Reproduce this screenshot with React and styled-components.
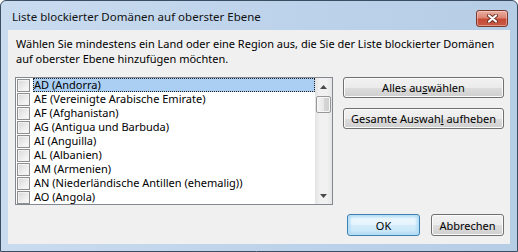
import React, { useState } from 'react'
import styled, { createGlobalStyle } from 'styled-components'

const GlobalStyle = createGlobalStyle`
  body {
    margin: 0;
    background: #ffffff;
    font-family: "Noto Sans", "Open Sans", sans-serif;
  }
  * { box-sizing: border-box; }
`

const countries = [
  'AD (Andorra)',
  'AE (Vereinigte Arabische Emirate)',
  'AF (Afghanistan)',
  'AG (Antigua und Barbuda)',
  'AI (Anguilla)',
  'AL (Albanien)',
  'AM (Armenien)',
  'AN (Niederländische Antillen (ehemalig))',
  'AO (Angola)',
]

function CloseGlyph() {
  return (
    <svg width="11" height="9" viewBox="0 0 11 9">
      <path d="M2 1.5 L9 7.5 M9 1.5 L2 7.5" stroke="#6d3028" strokeWidth="4" strokeLinecap="round" />
      <path d="M2 1.5 L9 7.5 M9 1.5 L2 7.5" stroke="#ffffff" strokeWidth="2.2" strokeLinecap="round" />
    </svg>
  )
}

function Arrow({ down }) {
  return (
    <svg width="7" height="4" viewBox="0 0 7 4">
      <path d={down ? 'M0 0 L7 0 L3.5 4 Z' : 'M0 4 L7 4 L3.5 0 Z'} fill="#4a4a4a" />
    </svg>
  )
}

function App() {
  const [selected, setSelected] = useState(0)
  const [checked, setChecked] = useState({})

  return (
    <>
      <GlobalStyle />
      <Window>
        <TitleBar>
          <Title>Liste blockierter Domänen auf oberster Ebene</Title>
          <CloseButton><CloseGlyph /></CloseButton>
        </TitleBar>
        <Content>
          <Prompt>
            Wählen Sie mindestens ein Land oder eine Region aus, die Sie der Liste blockierter Domänen
            <br />
            auf oberster Ebene hinzufügen möchten.
          </Prompt>
          <MainRow>
            <ListBox>
              <Items>
                {countries.map((c, i) => (
                  <Item key={c} onClick={() => setSelected(i)}>
                    <Check
                      $on={checked[i]}
                      onClick={(e) => {
                        e.stopPropagation()
                        setChecked({ ...checked, [i]: !checked[i] })
                      }}
                    />
                    <Label $selected={selected === i}>{c}</Label>
                  </Item>
                ))}
              </Items>
              <ScrollBar>
                <ScrollArrow><Arrow /></ScrollArrow>
                <Thumb />
                <Track />
                <ScrollArrow><Arrow down /></ScrollArrow>
              </ScrollBar>
            </ListBox>
            <SideButtons>
              <Button><span>Alles au<u>s</u>wählen</span></Button>
              <Button><span>Gesamte Auswah<u>l</u> aufheben</span></Button>
            </SideButtons>
          </MainRow>
          <Footer>
            <Button $primary $w={73}>OK</Button>
            <Button $w={73}>Abbrechen</Button>
          </Footer>
        </Content>
      </Window>
    </>
  )
}

const Window = styled.div`
  width: 518px;
  height: 252px;
  border: 1px solid #3b4d61;
  border-radius: 6px 6px 0 0;
  background: linear-gradient(90deg, #c9dbef 0%, #bcd2ea 60%, #b6cde6 100%);
  display: flex;
  flex-direction: column;
  padding: 0 7px 7px 7px;
`

const TitleBar = styled.div`
  height: 29px;
  display: flex;
  align-items: flex-start;
  justify-content: space-between;
  padding-left: 4px;
  padding-right: 2px;
`

const Title = styled.div`
  margin-top: 8px;
  font-size: 11.5px;
  line-height: 16px;
  color: #111;
  white-space: nowrap;
`

const CloseButton = styled.div`
  margin-top: 9px;
  width: 32px;
  height: 17px;
  border: 1px solid #7b3a30;
  border-radius: 3px;
  background: linear-gradient(#eab0a3 0%, #dc8472 45%, #c84a35 55%, #c65a43 100%);
  box-shadow: inset 0 0 0 1px rgba(255, 220, 210, 0.45);
  display: flex;
  align-items: center;
  justify-content: center;
`

const Content = styled.div`
  flex: 1;
  background: #f0f0f0;
  padding: 6px 6px 8px 7px;
  display: flex;
  flex-direction: column;
`

const Prompt = styled.div`
  font-size: 11px;
  line-height: 15px;
  color: #000;
  padding-left: 1px;
  white-space: nowrap;
  margin-bottom: 11px;
`

const MainRow = styled.div`
  display: flex;
  gap: 10px;
`

const ListBox = styled.div`
  width: 318px;
  height: 128px;
  border: 1px solid #828790;
  background: #fff;
  display: flex;
`

const Items = styled.div`
  flex: 1;
  display: flex;
  flex-direction: column;
`

const Item = styled.div`
  height: 14px;
  display: flex;
  align-items: center;
  padding-left: 1px;
  font-size: 11px;
  color: #000;
`

const Check = styled.span`
  width: 13px;
  height: 13px;
  flex: none;
  border: 1px solid #8e8f8f;
  background: linear-gradient(135deg, #d6d6d6 0%, #eeeeee 60%, #fbfbfb 100%);
  box-shadow: inset 0 0 0 1px #f2f2f2;
  margin-right: 3px;
  position: relative;
  &::after {
    content: ${(p) => (p.$on ? "'✓'" : "''")};
    position: absolute;
    left: 1px;
    top: -3px;
    font-size: 11px;
    color: #2b4b7a;
  }
`

const Label = styled.span`
  flex: 1;
  height: 14px;
  line-height: 14px;
  padding-left: 1px;
  white-space: nowrap;
  background: ${(p) => (p.$selected ? '#aacff3' : 'transparent')};
  outline: ${(p) => (p.$selected ? '1px dotted #222' : 'none')};
  outline-offset: -1px;
`

const ScrollBar = styled.div`
  width: 17px;
  display: flex;
  flex-direction: column;
  background: linear-gradient(90deg, #e3e3e3 0%, #f1f1f1 30%, #f1f1f1 70%, #e6e6e6 100%);
`

const ScrollArrow = styled.div`
  height: 17px;
  display: flex;
  align-items: center;
  justify-content: center;
`

const Thumb = styled.div`
  height: 17px;
  margin: 1px 1px 0 1px;
  border: 1px solid #979797;
  border-radius: 2px;
  background: linear-gradient(90deg, #f4f4f4 0%, #e8e8e8 50%, #d6d6d6 51%, #cfcfcf 100%);
  box-shadow: inset 0 0 0 1px #f7f7f7;
`

const Track = styled.div`
  flex: 1;
`

const SideButtons = styled.div`
  width: 161px;
  display: flex;
  flex-direction: column;
  gap: 10px;
`

const Button = styled.div`
  width: ${(p) => (p.$w ? `${p.$w}px` : 'auto')};
  height: ${(p) => (p.$w ? '22px' : '21px')};
  border: 1px solid ${(p) => (p.$primary ? '#3c7fb1' : '#707070')};
  border-radius: 3px;
  background: ${(p) =>
    p.$primary
      ? 'linear-gradient(#f0f8fd 0%, #e4f3fc 50%, #d3ecfa 51%, #c7e5f7 100%)'
      : 'linear-gradient(#f2f2f2 0%, #ebebeb 50%, #dddddd 51%, #cfcfcf 100%)'};
  box-shadow: ${(p) =>
    p.$primary ? 'inset 0 0 0 1px #b9e0f7, inset 0 0 3px 2px #a9d8f4' : 'inset 0 0 0 1px #fbfbfb'};
  display: flex;
  align-items: center;
  justify-content: center;
  font-size: 11px;
  color: #000;
  white-space: nowrap;
  cursor: default;
`

const Footer = styled.div`
  margin-top: auto;
  display: flex;
  justify-content: flex-end;
  gap: 11px;
`

export default App
